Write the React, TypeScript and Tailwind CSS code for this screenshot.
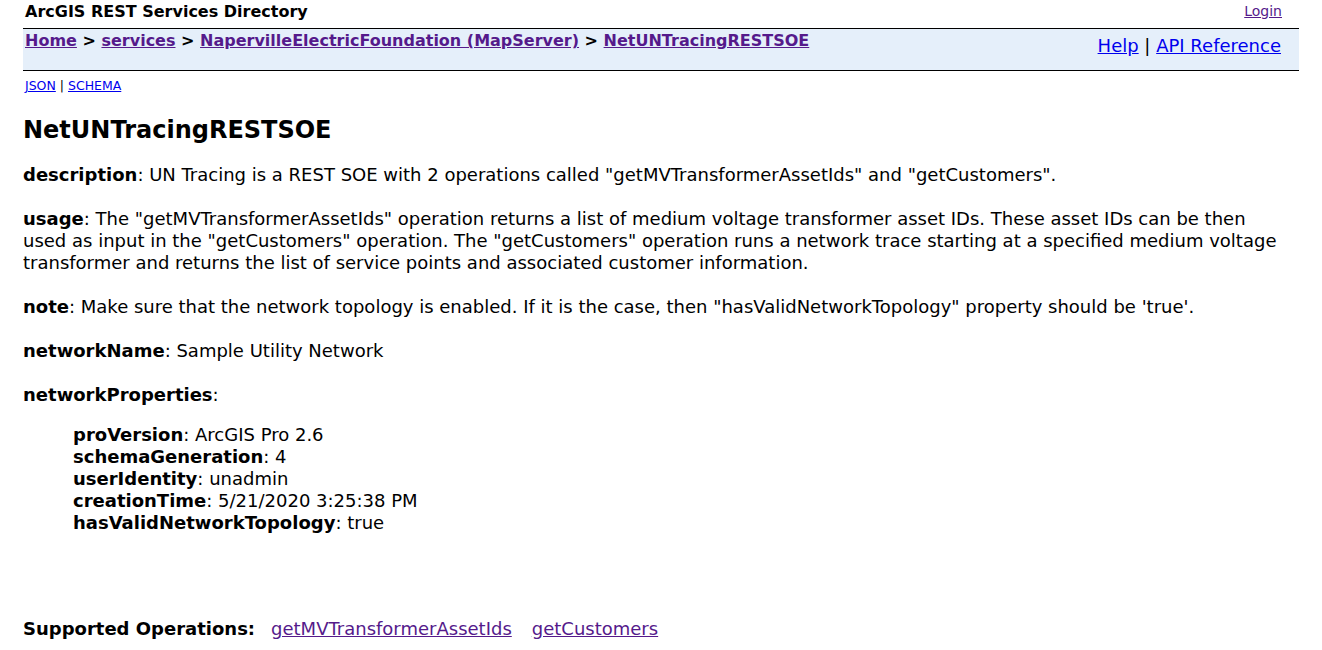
export default function App() {
  const props: [string, string][] = [
    ["proVersion", "ArcGIS Pro 2.6"],
    ["schemaGeneration", "4"],
    ["userIdentity", "unadmin"],
    ["creationTime", "5/21/2020 3:25:38 PM"],
    ["hasValidNetworkTopology", "true"],
  ];

  return (
    <div className="min-h-[650px] bg-white px-[23px] text-black font-['DejaVu_Sans',Verdana,sans-serif]">
      {/* top title row */}
      <div className="flex items-start justify-between pl-[2px] pr-[17px] h-[28px] pt-[3px]">
        <div className="text-[16px] font-bold leading-[18px]">ArcGIS REST Services Directory</div>
        <a href="#" className="text-[14px] leading-[16px] text-[#551a8b] underline">
          Login
        </a>
      </div>

      {/* breadcrumb bar */}
      <div className="flex justify-between border-y border-black bg-[#e5effa] h-[43px] pl-[2px] pr-[17px]">
        <div className="pt-[2px] text-[16px] font-bold leading-[20px]">
          <a href="#" className="text-[#551a8b] underline">Home</a>
          {" > "}
          <a href="#" className="text-[#551a8b] underline">services</a>
          {" > "}
          <a href="#" className="text-[#551a8b] underline">NapervilleElectricFoundation (MapServer)</a>
          {" > "}
          <a href="#" className="text-[#551a8b] underline">NetUNTracingRESTSOE</a>
        </div>
        <div className="pt-[6px] pr-[1px] text-[18px] leading-[22px]">
          <a href="#" className="text-[#0000ee] underline">Help</a>
          {" | "}
          <a href="#" className="text-[#0000ee] underline">API Reference</a>
        </div>
      </div>

      <div className="mt-[7px] pl-[2px] text-[12.5px] leading-[16px]">
        <a href="#" className="text-[#0000ee] underline">JSON</a>
        {" | "}
        <a href="#" className="text-[#0000ee] underline">SCHEMA</a>
      </div>

      <h2 className="mt-[21px] text-[24px] font-bold leading-[30px]">NetUNTracingRESTSOE</h2>

      <div className="mt-[19px] pr-[12px] text-[18px] leading-[22px]">
        <p>
          <b>description</b>: UN Tracing is a REST SOE with 2 operations called "getMVTransformerAssetIds" and
          "getCustomers".
        </p>
        <p className="mt-[22px]">
          <b>usage</b>: The "getMVTransformerAssetIds" operation returns a list of medium voltage transformer asset IDs.
          These asset IDs can be then used as input in the "getCustomers" operation. The "getCustomers" operation runs a
          network trace starting at a specified medium voltage transformer and returns the list of service points and
          associated customer information.
        </p>
        <p className="mt-[22px]">
          <b>note</b>: Make sure that the network topology is enabled. If it is the case, then "hasValidNetworkTopology"
          property should be 'true'.
        </p>
        <p className="mt-[22px]">
          <b>networkName</b>: Sample Utility Network
        </p>
        <p className="mt-[22px]">
          <b>networkProperties</b>:
        </p>
        <ul className="mt-[18px] pl-[50px]">
          {props.map(([k, v]) => (
            <li key={k}>
              <b>{k}</b>: {v}
            </li>
          ))}
        </ul>

        <p className="mt-[84px]">
          <b className="mr-[16px]">Supported Operations:</b>
          <a href="#" className="text-[#551a8b] underline mr-[20px]">getMVTransformerAssetIds</a>
          <a href="#" className="text-[#551a8b] underline">getCustomers</a>
        </p>
      </div>
    </div>
  );
}
